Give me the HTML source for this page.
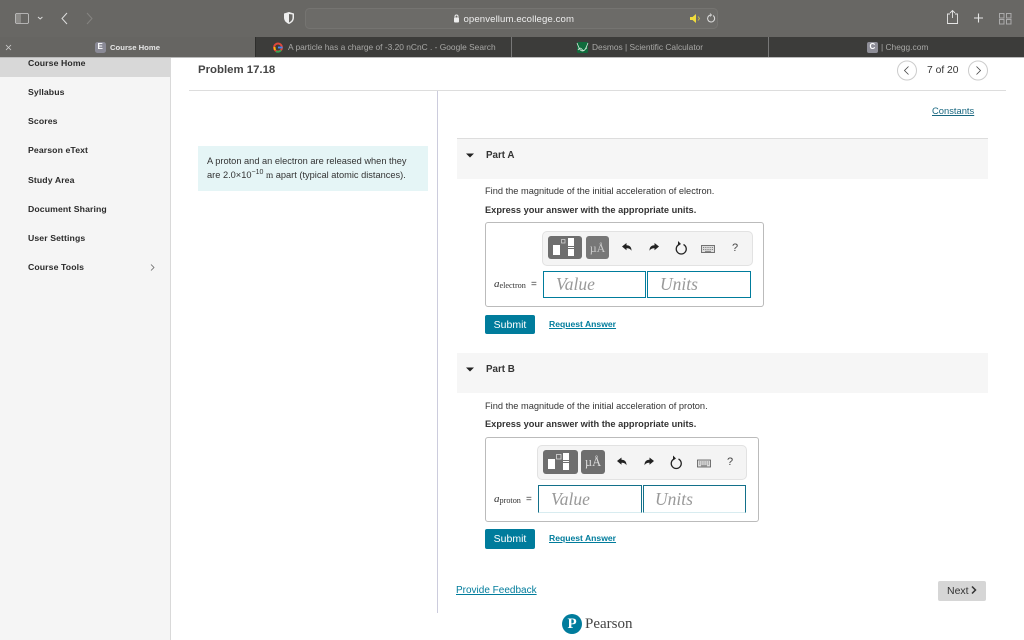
<!DOCTYPE html>
<html><head><meta charset="utf-8">
<style>
html,body{margin:0;padding:0;background:#fff}
body{width:1024px;height:640px;position:relative;overflow:hidden;font-family:"Liberation Sans",sans-serif;color:#333}
.a{position:absolute;white-space:nowrap}
.nav{font-size:8.7px;font-weight:bold;color:#2a2a2a;left:28px;letter-spacing:.1px}
.tab{font-size:8.4px;color:#a8a8a6;letter-spacing:0}
.ph{font-family:"Liberation Serif",serif;font-style:italic;font-size:17.5px;color:#999}
.lnk{color:#007c9c;text-decoration:underline}
.btn{background:#007c9c;color:#fff;font-size:10.5px;text-align:center;border-radius:2px}
svg{position:absolute;overflow:visible}
.p{font-size:9.25px;color:#333}
.b{font-size:9.25px;font-weight:bold;color:#333}
</style></head><body>

<div class="a" style="left:0;top:0;width:1024px;height:37px;background:#686764"></div>
<div class="a" style="left:0;top:37px;width:256px;height:20px;background:#666562"></div>
<div class="a" style="left:256px;top:37px;width:768px;height:20px;background:#3c3c3a"></div>
<div class="a" style="left:0;top:57px;width:1024px;height:1px;background:#bbb"></div>
<div class="a" style="left:255px;top:37px;width:1px;height:20px;background:#2e2e2c"></div>
<div class="a" style="left:511px;top:37px;width:1px;height:20px;background:#777"></div>
<div class="a" style="left:768px;top:37px;width:1px;height:20px;background:#777"></div>

<svg style="left:0;top:0" width="1024" height="57" viewBox="0 0 1024 57" fill="none">
<rect x="15.500" y="13.500" width="13" height="10" rx="1.500" stroke="#ccc" stroke-width=".8"/><rect x="16" y="14" width="5" height="9" fill="#8c8b88"/>
<path d="M38 17l2.200 2 2.200-2" stroke="#ddd" stroke-width="1"/>
<path d="M67 13l-5 5.500 5 5.500" stroke="#ddd" stroke-width="1"/>
<path d="M87 13l5 5.500-5 5.500" stroke="#858481" stroke-width="1"/>
<path d="M284 13.500l5-1.500 5 1.500v4c0 3.500-2.500 5.500-5 6.500-2.500-1-5-3-5-6.500z" fill="#eee"/>
<path d="M289 14v8.500c2-1 3.500-2.500 3.500-5v-3z" fill="#686764"/>
<rect x="305.500" y="8.500" width="412" height="20" rx="4" fill="#6c6b68" stroke="#757471"/>
<rect x="454" y="17.500" width="5" height="5" rx="1" fill="#eee"/><path d="M455 18v-1.500a1.500 1.500 0 013 0V18" stroke="#eee"/>
<path d="M690 17h2.500l3.500-3v9l-3.500-3H690z" fill="#f0dc3c"/><path d="M698 16.500l1.500 2-1.500 2" stroke="#c8b94a"/>
<path d="M713 15.500a3.500 3.500 0 11-2.500-.5" stroke="#ddd"/><path d="M710 13.500l1.500 1.500-1.500 1.500" stroke="#ddd" stroke-width=".8"/>
<path d="M950 14h-2.500v9.500h10V14h-2.500M952.500 18V11M950 13l2.500-2.500 2.500 2.500" stroke="#e6e6e6" stroke-width=".9"/>
<path d="M978.500 13.500v9M974 18h9" stroke="#e6e6e6" stroke-width="1.100"/>
<rect x="999.500" y="13.500" width="4.500" height="4.500" stroke="#aaa"/><rect x="1006.500" y="13.500" width="4.500" height="4.500" stroke="#aaa"/><rect x="999.500" y="19.500" width="4.500" height="4.500" stroke="#aaa"/><rect x="1006.500" y="19.500" width="4.500" height="4.500" stroke="#aaa"/>
<path d="M6 45l5 5M11 45l-5 5" stroke="#cfcfcf" stroke-width=".8"/>
<rect x="95" y="42" width="11" height="11" rx="2.500" fill="#8a8a96"/>
<rect x="867" y="42" width="11" height="11" rx="2" fill="#8e8e98"/>
<circle cx="278" cy="47.500" r="4" stroke="#e0483a" stroke-width="2"/>
<path d="M278 47.500h4.500" stroke="#4285f4" stroke-width="1.800"/><path d="M275 50l-.5-3" stroke="#fbbc05" stroke-width="1.800"/><path d="M276 51.300a4 4 0 005 -1" stroke="#34a853" stroke-width="1.800"/>
<rect x="577" y="42" width="11" height="11" rx="1.500" fill="#0f6b3c"/>
<path d="M577 43c2 5 3 8 5.500 8s3.500-3 5.500-8M578 50c2-3 3-2 4.500 0s3-2 4.500-2" stroke="#d7eadd" stroke-width=".8"/>
</svg>
<div class="a" style="left:463.500px;top:13.500px;font-size:9.600px;line-height:12px;color:#eee;letter-spacing:.1px">openvellum.ecollege.com</div>
<div class="a" style="left:97.500px;top:42px;font-size:8px;font-weight:bold;color:#fff">E</div>
<div class="a" style="left:110px;top:42.500px;font-size:7.700px;font-weight:bold;color:#e6e6e6">Course Home</div>
<div class="a tab" style="left:288px;top:42px">A particle has a charge of -3.20 nCnC . - Google Search</div>
<div class="a tab" style="left:592px;top:42px">Desmos | Scientific Calculator</div>
<div class="a" style="left:869.500px;top:42px;font-size:8px;font-weight:bold;color:#fff">C</div>
<div class="a tab" style="left:881px;top:42px">| Chegg.com</div>

<div class="a" style="left:0;top:58px;width:170px;height:582px;background:#f5f5f5;border-right:1px solid #d9d9d9"></div>
<div class="a" style="left:0;top:58px;width:170px;height:19px;background:#d8d8d8"></div>
<div class="a nav" style="top:58px">Course Home</div>
<div class="a nav" style="top:87px">Syllabus</div>
<div class="a nav" style="top:116px">Scores</div>
<div class="a nav" style="top:145px">Pearson eText</div>
<div class="a nav" style="top:175px">Study Area</div>
<div class="a nav" style="top:204px">Document Sharing</div>
<div class="a nav" style="top:233px">User Settings</div>
<div class="a nav" style="top:262px">Course Tools</div>
<svg style="left:0;top:0" width="170" height="300" fill="none"><path d="M151 264.500l3 3-3 3" stroke="#666" stroke-width=".8"/></svg>

<div class="a" style="left:198px;top:64px;font-size:11.400px;font-weight:bold;color:#444">Problem 17.18</div>
<div class="a" style="left:189px;top:90px;width:817px;height:1px;background:#ddd"></div>
<div class="a" style="left:437px;top:91px;width:1px;height:522px;background:#ccd"></div>
<svg style="left:0;top:0" width="1024" height="90" fill="none">
<circle cx="907" cy="70.500" r="9.500" stroke="#ccc"/><path d="M908.500 66.500l-4 4 4 4" stroke="#444" stroke-width=".8"/>
<circle cx="978" cy="70.500" r="9.500" stroke="#ccc"/><path d="M976.500 66.500l4 4-4 4" stroke="#444" stroke-width=".8"/>
</svg>
<div class="a" style="left:927px;top:65px;font-size:10.300px;color:#333">7 of 20</div>
<div class="a lnk" style="left:932px;top:104.500px;font-size:9.400px;color:#17667f">Constants</div>

<div class="a" style="left:198px;top:146px;width:230px;height:45px;background:#e5f5f6"></div>
<div class="a p" style="left:207px;top:156px">A proton and an electron are released when they</div>
<div class="a p" style="left:207px;top:170px">are 2.0×10<sup style="font-size:7px;line-height:0">−10</sup> <span style="font-family:'Liberation Serif',serif">m</span> apart (typical atomic distances).</div>

<!-- Part A -->
<div class="a" style="left:457px;top:138px;width:531px;height:40px;background:#f6f6f6;border-top:1px solid #ddd"></div>
<div class="a" style="left:486px;top:149.500px;font-size:9.800px;font-weight:bold;color:#333">Part A</div>
<div class="a p" style="left:485px;top:186px">Find the magnitude of the initial acceleration of electron.</div>
<div class="a b" style="left:485px;top:205px">Express your answer with the appropriate units.</div>
<div class="a" style="left:485px;top:222px;width:277px;height:83px;border:1px solid #bbb;border-radius:3px"></div>
<div class="a" style="left:542px;top:231px;width:209px;height:33px;background:#f4f4f4;border:1px solid #e2e2e2;border-radius:5px"></div>
<div class="a" style="left:548px;top:236px;width:34px;height:23px;background:#6e6e6e;border-radius:3px"></div>
<div class="a" style="left:586px;top:236px;width:23px;height:23px;background:#777;border-radius:3px;color:#ccc;font:12px 'Liberation Serif',serif;text-align:center;line-height:24px">µÅ</div>
<svg style="left:0;top:0" width="1024" height="310">
<rect x="553" y="245" width="7" height="10" fill="#fff"/><rect x="561.500" y="239.500" width="3.500" height="3.500" fill="none" stroke="#ddd" stroke-width=".7"/><rect x="568" y="238" width="6" height="8" fill="#fff"/><rect x="568" y="247" width="6" height="1" fill="#fff"/><rect x="568" y="249" width="6" height="7" fill="#fff"/>
<path d="M622 246.500l4.500-3.500v2.300c3.500 0 5 2 5 5.500-1.200-2-2.800-2.500-5-2.500v2z" fill="#222"/>
<path d="M659 246.500l-4.500-3.500v2.300c-3.500 0-5 2-5 5.500 1.200-2 2.800-2.500 5-2.500v2z" fill="#222"/>
<path d="M679 244.500a5 5 0 104.500 0" fill="none" stroke="#222" stroke-width="1.300"/><path d="M678 241l3 3-3 2z" fill="#222"/>
<rect x="701.500" y="245.500" width="13" height="7" fill="#ddd" stroke="#555" stroke-width=".8"/><path d="M703 247.500h10M703 249.500h10" stroke="#666" stroke-dasharray="1 .8" stroke-width=".8"/><path d="M705 251.300h6" stroke="#666" stroke-width=".8"/>
</svg>
<div class="a" style="left:732px;top:242px;font-size:11px;color:#444">?</div>
<div class="a" style="left:494px;top:278px;font:11px 'Liberation Serif',serif;font-style:italic;color:#333">a<span style="font-size:8.200px;font-style:normal;position:relative;top:1px">electron</span></div>
<div class="a" style="left:531px;top:279px;font:10px 'Liberation Sans',sans-serif;color:#444">=</div>
<div class="a" style="left:543px;top:271px;width:101px;height:25px;border:1px solid #007c9c"></div>
<div class="a" style="left:647px;top:271px;width:102px;height:25px;border:1px solid #007c9c"></div>
<div class="a ph" style="left:556px;top:274px">Value</div>
<div class="a ph" style="left:660px;top:274px">Units</div>
<div class="a btn" style="left:485px;top:315px;width:50px;height:19px;line-height:20px">Submit</div>
<div class="a lnk" style="left:549px;top:319px;font-size:8.600px;font-weight:bold">Request Answer</div>

<!-- Part B -->
<div class="a" style="left:457px;top:353px;width:531px;height:40px;background:#f6f6f6"></div>
<svg style="left:0;top:0" width="1024" height="400"><path d="M466 153.500h8l-4 4z" fill="#222"/><path d="M466 367.500h8l-4 4z" fill="#222"/></svg>
<div class="a" style="left:486px;top:363.500px;font-size:9.800px;font-weight:bold;color:#333">Part B</div>
<div class="a p" style="left:485px;top:401px">Find the magnitude of the initial acceleration of proton.</div>
<div class="a b" style="left:485px;top:419px">Express your answer with the appropriate units.</div>
<div class="a" style="left:485px;top:437px;width:272px;height:83px;border:1px solid #bbb;border-radius:3px"></div>
<div class="a" style="left:537px;top:445px;width:208px;height:33px;background:#f4f4f4;border:1px solid #e2e2e2;border-radius:5px"></div>
<div class="a" style="left:543px;top:450px;width:35px;height:24px;background:#6e6e6e;border-radius:3px"></div>
<div class="a" style="left:581px;top:450px;width:24px;height:24px;background:#6e6e6e;border-radius:3px;color:#ddd;font:12.500px 'Liberation Serif',serif;text-align:center;line-height:25px">µÅ</div>
<svg style="left:0;top:0" width="1024" height="525">
<rect x="548" y="459" width="7" height="10" fill="#fff"/><rect x="556.500" y="454.500" width="4.500" height="4.500" fill="none" stroke="#ddd" stroke-width=".8"/><rect x="563" y="453" width="6" height="7" fill="#fff"/><rect x="563" y="461" width="6" height="1" fill="#fff"/><rect x="563" y="463" width="6" height="7" fill="#fff"/>
<path d="M617 461l4.500-3.500v2.300c3.500 0 5 2 5 5.500-1.200-2-2.800-2.500-5-2.500v2z" fill="#222"/>
<path d="M654 461l-4.500-3.500v2.300c-3.500 0-5 2-5 5.500 1.200-2 2.800-2.500 5-2.500v2z" fill="#222"/>
<path d="M674 459a5 5 0 104.500 0" fill="none" stroke="#222" stroke-width="1.300"/><path d="M673 455.500l3 3-3 2z" fill="#222"/>
<rect x="697.500" y="460" width="13" height="7" fill="#ddd" stroke="#555" stroke-width=".8"/><path d="M699 462h10M699 464h10" stroke="#666" stroke-dasharray="1 .8" stroke-width=".8"/><path d="M701 465.800h6" stroke="#666" stroke-width=".8"/>
</svg>
<div class="a" style="left:727px;top:456px;font-size:11px;color:#444">?</div>
<div class="a" style="left:494px;top:493px;font:11px 'Liberation Serif',serif;font-style:italic;color:#333">a<span style="font-size:8.200px;font-style:normal;position:relative;top:1px">proton</span></div>
<div class="a" style="left:526px;top:494px;font:10px 'Liberation Sans',sans-serif;color:#444">=</div>
<div class="a" style="left:538px;top:485px;width:102px;height:26px;border:1px solid #007c9c;border-color:#13708a #13708a #d8ecf0"></div>
<div class="a" style="left:643px;top:485px;width:101px;height:26px;border:1px solid #007c9c;border-color:#13708a #13708a #d8ecf0"></div>
<div class="a ph" style="left:551px;top:489px">Value</div>
<div class="a ph" style="left:655px;top:489px">Units</div>
<div class="a btn" style="left:485px;top:529px;width:50px;height:20px;line-height:21px">Submit</div>
<div class="a lnk" style="left:549px;top:533px;font-size:8.600px;font-weight:bold">Request Answer</div>

<div class="a lnk" style="left:456px;top:584.500px;font-size:10px">Provide Feedback</div>
<div class="a" style="left:938px;top:581px;width:48px;height:20px;background:#d6d6d6;border-radius:2px;font-size:10.500px;line-height:20px;color:#333"><span style="margin-left:9px">Next</span></div>
<svg style="left:0;top:0" width="1024" height="640" fill="none">
<path d="M972 586.500l3.500 3.500-3.500 3.500" stroke="#333" stroke-width="1.500"/>
<circle cx="572" cy="624" r="10" fill="#007c9c"/>
</svg>
<div class="a" style="left:567.500px;top:615.500px;font:15px 'Liberation Serif',serif;font-weight:bold;color:#fff">P</div>
<div class="a" style="left:585px;top:615.500px;font:15px 'Liberation Serif',serif;color:#444">Pearson</div>
</body></html>
